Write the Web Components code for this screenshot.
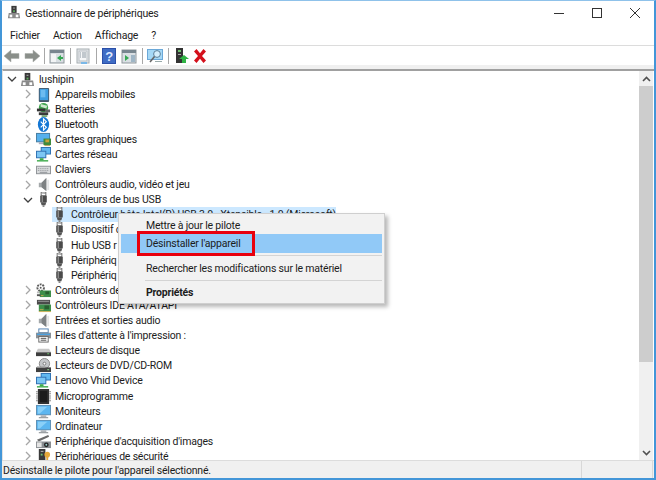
<!DOCTYPE html>
<html lang="fr">
<head>
<meta charset="utf-8">
<title>Gestionnaire de périphériques</title>
<style>
  html, body { margin: 0; padding: 0; background: #fff; overflow: hidden; }
</style>
</head>
<body>
<dm-window>
  <dm-titlebar slot="title">Gestionnaire de périphériques</dm-titlebar>
  <dm-menubar slot="menu"></dm-menubar>
  <dm-toolbar slot="toolbar"></dm-toolbar>
  <dm-tree slot="tree">
    <dm-row level="0" icon="root" open>lushipin</dm-row>
    <dm-row level="1" icon="mobile" closed>Appareils mobiles</dm-row>
    <dm-row level="1" icon="battery" closed>Batteries</dm-row>
    <dm-row level="1" icon="bluetooth" closed>Bluetooth</dm-row>
    <dm-row level="1" icon="gpu" closed>Cartes graphiques</dm-row>
    <dm-row level="1" icon="network" closed>Cartes réseau</dm-row>
    <dm-row level="1" icon="keyboard" closed>Claviers</dm-row>
    <dm-row level="1" icon="speaker" closed>Contrôleurs audio, vidéo et jeu</dm-row>
    <dm-row level="1" icon="usb" open>Contrôleurs de bus USB</dm-row>
    <dm-row level="2" icon="usb" selected>Contrôleur hôte Intel(R) USB 3.0 - Xtensible - 1.0 (Microsoft)</dm-row>
    <dm-row level="2" icon="usb">Dispositif c</dm-row>
    <dm-row level="2" icon="usb">Hub USB r</dm-row>
    <dm-row level="2" icon="usb">Périphériq</dm-row>
    <dm-row level="2" icon="usb">Périphériq</dm-row>
    <dm-row level="1" icon="storage" closed>Contrôleurs de</dm-row>
    <dm-row level="1" icon="ide" closed>Contrôleurs IDE ATA/ATAPI</dm-row>
    <dm-row level="1" icon="speaker" closed>Entrées et sorties audio</dm-row>
    <dm-row level="1" icon="printer" closed>Files d'attente à l'impression :</dm-row>
    <dm-row level="1" icon="disk" closed>Lecteurs de disque</dm-row>
    <dm-row level="1" icon="dvd" closed>Lecteurs de DVD/CD-ROM</dm-row>
    <dm-row level="1" icon="network" closed>Lenovo Vhid Device</dm-row>
    <dm-row level="1" icon="chip" closed>Microprogramme</dm-row>
    <dm-row level="1" icon="monitor" closed>Moniteurs</dm-row>
    <dm-row level="1" icon="monitor" closed>Ordinateur</dm-row>
    <dm-row level="1" icon="camera" closed>Périphérique d'acquisition d'images</dm-row>
    <dm-row level="1" icon="security" closed>Périphériques de sécurité</dm-row>
  </dm-tree>
  <dm-statusbar slot="status">Désinstalle le pilote pour l'appareil sélectionné.</dm-statusbar>
  <dm-context-menu slot="overlay"></dm-context-menu>
</dm-window>

<script>
const FONT = `Roboto, "Noto Sans", sans-serif`;

const ICONS = {
  root: `<rect x="5" y="1" width="6" height="8" fill="#3a3a3a"/><rect x="7" y="3" width="2" height="1" fill="#bbb"/><rect x="7" y="6" width="2" height="2" fill="#5fb05f"/><path d="M2 9h12l1 6H1z" fill="#8a8a8a"/><rect x="3" y="11" width="3" height="3" fill="#fff"/><rect x="10" y="11" width="3" height="3" fill="#fff"/>`,
  mobile: `<rect x="3" y="1" width="11" height="15" rx="1" fill="#46586a"/><rect x="4" y="2" width="9" height="12" fill="#3e9ee0"/><rect x="5" y="3" width="5" height="8" fill="#6cbcf0"/>`,
  battery: `<circle cx="8" cy="6" r="5" fill="#3fa34d"/><path d="M5 2l7 2-1 3-6-2z" fill="#cfe8cf"/><rect x="1" y="7" width="9" height="3" fill="#333"/><rect x="3" y="11" width="10" height="3" fill="#3a3a3a"/><rect x="10" y="8" width="5" height="3" fill="#666"/><rect x="6" y="14" width="6" height="2" fill="#7aa87a"/>`,
  bluetooth: `<ellipse cx="8" cy="8" rx="6" ry="8" fill="#1477d4"/><path d="M5 5l6 6-3 3V2l3 3-6 6" fill="none" stroke="#fff" stroke-width="1.2"/>`,
  gpu: `<rect x="0" y="1" width="15" height="10" fill="#4a7d9e"/><rect x="1" y="2" width="13" height="8" fill="#56b0ec"/><rect x="3" y="11" width="9" height="2" fill="#aab"/><rect x="8" y="7" width="8" height="7" fill="#3d8a3d"/><rect x="10" y="8" width="4" height="3" fill="#c9a23a"/><rect x="9" y="14" width="6" height="1" fill="#b8a050"/>`,
  network: `<rect x="5" y="0" width="11" height="8" fill="#2f6fb0"/><rect x="6" y="1" width="9" height="6" fill="#62b8f0"/><rect x="0" y="4" width="11" height="8" fill="#2f6fb0"/><rect x="1" y="5" width="9" height="6" fill="#7cc6f4"/><rect x="4" y="12" width="4" height="2" fill="#3daa4a"/><rect x="1" y="14" width="12" height="1.5" fill="#3daa4a"/>`,
  keyboard: `<rect x="0" y="4" width="16" height="9" fill="#8e9296"/><rect x="1" y="5" width="14" height="7" fill="#d8dadc"/><path d="M2 7h12M2 9h12" stroke="#8e9296" stroke-width="1" stroke-dasharray="1 1"/><rect x="4" y="10.5" width="8" height="1" fill="#8e9296"/>`,
  speaker: `<path d="M3 6h3l5-5v14l-5-4H3z" fill="#a4a8aa"/><path d="M6 6l5-5v14l-5-4z" fill="#7d8183"/><rect x="12" y="3" width="2" height="11" fill="#e2e4e5"/>`,
  usb: `<rect x="5.5" y="0" width="5" height="4" fill="#fff" stroke="#666"/><rect x="7" y="1" width="1" height="1" fill="#666"/><rect x="9" y="1" width="1" height="1" fill="#666"/><rect x="4.5" y="4" width="7" height="7" fill="#4a4a4a"/><rect x="6" y="4" width="1.5" height="7" fill="#8a8a8a"/><path d="M5 11h6l-1 3H6z" fill="#555"/><rect x="7" y="14" width="2" height="2" fill="#888"/>`,
  storage: `<circle cx="5" cy="5" r="3.5" fill="none" stroke="#5a5a5a" stroke-width="2" stroke-dasharray="2 1"/><circle cx="5" cy="5" r="1" fill="#5a5a5a"/><rect x="1" y="9" width="8" height="2" fill="#bbb"/><rect x="4" y="8" width="12" height="7" fill="#3d8f4a"/><rect x="10" y="9" width="4" height="3" fill="#2a5f30"/><rect x="5" y="13" width="3" height="1" fill="#c9b050"/><rect x="1" y="12" width="4" height="2" fill="#555"/>`,
  ide: `<rect x="1" y="2" width="14" height="5" fill="#4a4a4a"/><rect x="2" y="3" width="12" height="1" fill="#9a9a9a"/><rect x="3" y="7" width="13" height="7" fill="#3d8f4a"/><rect x="9" y="8" width="5" height="4" fill="#295f30"/><rect x="4" y="12" width="4" height="1" fill="#ccb050"/><rect x="3" y="14" width="13" height="1" fill="#c6ad50"/>`,
  printer: `<rect x="3" y="1" width="10" height="4" fill="#fff" stroke="#4f7fae"/><rect x="0" y="5" width="16" height="6" fill="#8a9096"/><rect x="1" y="6" width="14" height="1.5" fill="#4aa0e0"/><rect x="3" y="9" width="10" height="6" fill="#fff" stroke="#666"/><path d="M5 11h6M5 13h6" stroke="#444"/>`,
  disk: `<path d="M2 6h12l2 4v3H0v-3z" fill="#c8c8c8"/><rect x="0" y="10" width="16" height="4" fill="#3e3e3e"/><rect x="12" y="11" width="2" height="1" fill="#6fd06f"/>`,
  dvd: `<circle cx="9" cy="6" r="5.5" fill="#c4c6c8" stroke="#888"/><circle cx="9" cy="6" r="1.5" fill="#fff" stroke="#777"/><rect x="0" y="10" width="16" height="5" fill="#404040"/><rect x="1" y="9" width="9" height="1.5" fill="#999"/><rect x="12" y="12" width="2" height="1" fill="#9d9"/>`,
  chip: `<rect x="2" y="0" width="12" height="16" fill="#333"/><rect x="4" y="2" width="8" height="12" fill="#1c1c1c"/><path d="M1 2v12M15 2v12" stroke="#888" stroke-width="2" stroke-dasharray="1 1"/>`,
  monitor: `<rect x="0" y="1" width="16" height="11" fill="#5f8fb4"/><rect x="1" y="2" width="14" height="9" fill="#5cb6f0"/><path d="M2 3h10L4 10H2z" fill="#8ad0f8"/><rect x="5" y="12" width="6" height="2" fill="#b0b4b8"/><rect x="3" y="14" width="10" height="1.2" fill="#8f9498"/>`,
  camera: `<path d="M1 6L13 1l1 2L3 8z" fill="#6a6a6a"/><rect x="0" y="8" width="16" height="7" fill="#8a8e92"/><rect x="1" y="9" width="5" height="5" fill="#e4e4e4"/><circle cx="11" cy="11.5" r="2.5" fill="#222"/><circle cx="11" cy="11.5" r="1" fill="#9cc"/>`,
  security: `<rect x="3" y="0" width="7" height="15" fill="#3a3a3a"/><rect x="5" y="2" width="3" height="1" fill="#bbb"/><rect x="5" y="5" width="2" height="2" fill="#6fbf6f"/><circle cx="12" cy="6" r="3" fill="#e6a93a"/><rect x="11" y="8" width="2" height="7" fill="#e6a93a"/><rect x="13" y="12" width="2" height="1.5" fill="#e6a93a"/>`,
  // toolbar
  back: `<path d="M0 8l7-6v3.5h8v5H7V14z" fill="#8a8f8a" stroke="#a9ada9" stroke-width=".5"/>`,
  forward: `<path d="M16 8L9 2v3.5H1v5h8V14z" fill="#8a8f8a" stroke="#a9ada9" stroke-width=".5"/>`,
  props: `<rect x="1" y="2" width="14" height="13" fill="#d9dfe3" stroke="#8f979c"/><rect x="1" y="2" width="14" height="3" fill="#78868f"/><rect x="2" y="6" width="5" height="8" fill="#f2f4f5"/><path d="M12 7l-4 3 4 3z" fill="#35a853"/><rect x="12" y="9" width="2" height="2" fill="#35a853"/>`,
  sheet: `<rect x="2" y="1" width="12" height="14" fill="#e6e9eb" stroke="#a6adb2"/><rect x="4" y="3" width="8" height="10" fill="#f6f7f8" stroke="#b9c0c5"/><path d="M5 5h1M7 5h4M5 7h1M7 7h4M5 9h1M7 9h4" stroke="#8d99a3"/><rect x="6" y="14" width="6" height="2" fill="#7ab8e8"/>`,
  help: `<rect x="1" y="0" width="14" height="16" fill="#2b4fa8"/><rect x="2" y="1" width="12" height="14" fill="#3f6cc4"/><text x="8" y="13" font-size="13" font-weight="700" font-family="Liberation Sans" text-anchor="middle" fill="#dfe8ff">?</text>`,
  props2: `<rect x="1" y="2" width="14" height="13" fill="#d9dfe3" stroke="#8f979c"/><rect x="1" y="2" width="14" height="3" fill="#78868f"/><path d="M4 7l4 3-4 3z" fill="#35a853"/><rect x="10" y="7" width="4" height="7" fill="#9fb6c6"/>`,
  scan: `<rect x="0" y="1" width="16" height="11" fill="#6ba8d8"/><rect x="1" y="2" width="14" height="9" fill="#a5d8f6"/><circle cx="10" cy="6" r="3.4" fill="#d4eefc" stroke="#5b7f99"/><path d="M7.5 8.5L3 14" stroke="#666" stroke-width="1.6"/><rect x="8" y="13" width="7" height="1" fill="#9aa"/>`,
  update: `<rect x="3" y="0" width="7" height="15" fill="#333"/><rect x="5" y="2" width="3" height="2" fill="#6fbf6f"/><rect x="5" y="6" width="3" height="1" fill="#aaa"/><path d="M11 7l5 4h-3v4H9v-4H6z" fill="#2fb344"/>`,
  remove: `<path d="M2 3.5L4.5 1 8 5.2 11.5 1 14 3.5 10 8l4 4.500L11.500 15 8 10.800 4.500 15 2 12.500 6 8z" fill="#d4101c"/>`
};

const svgIcon = (name, size = 16) =>
  `<svg width="${size}" height="${size}" viewBox="0 0 16 16" aria-hidden="true">${ICONS[name]}</svg>`;

class DmWindow extends HTMLElement {
  constructor() {
    super();
    this.attachShadow({ mode: "open" });
    this.shadowRoot.innerHTML = `
      <style>
        :host {
          display: flex;
          flex-direction: column;
          position: relative;
          box-sizing: border-box;
          width: 656px;
          height: 480px;
          overflow: hidden;
          background: #fff;
          border: 2px solid #4396d8;
          border-top: 1px solid #8fc2ea;
          font: 10.5px ${FONT};
          letter-spacing: -0.2px;
          color: #1c1c1c;
        }
        .middle { flex: 1; min-height: 0; display: flex; }
      </style>
      <slot name="title"></slot>
      <slot name="menu"></slot>
      <slot name="toolbar"></slot>
      <div class="middle"><slot name="tree"></slot></div>
      <slot name="status"></slot>
      <slot name="overlay"></slot>`;
  }
}

class DmTitlebar extends HTMLElement {
  constructor() {
    super();
    this.attachShadow({ mode: "open" });
    this.shadowRoot.innerHTML = `
      <style>
        :host { display: flex; align-items: center; height: 24px; flex: none; padding-left: 5px; }
        .ico { width: 15px; height: 16px; margin-right: 3px; }
        .txt { flex: 1; }
        .ctl { width: 38px; height: 24px; display: flex; align-items: center; justify-content: center; }
      </style>
      <div class="ico">${svgIcon("root", 14)}</div>
      <div class="txt"><slot></slot></div>
      <div class="ctl"><svg width="10" height="10"><path d="M0 5.500h10" stroke="#333"/></svg></div>
      <div class="ctl"><svg width="10" height="10"><rect x=".5" y=".5" width="9" height="9" fill="none" stroke="#333"/></svg></div>
      <div class="ctl"><svg width="10" height="10"><path d="M0 0l10 10M10 0L0 10" stroke="#333"/></svg></div>`;
  }
}

class DmMenubar extends HTMLElement {
  constructor() {
    super();
    this.attachShadow({ mode: "open" });
    this.shadowRoot.innerHTML = `
      <style>
        :host { display: flex; align-items: center; height: 20px; flex: none; padding-left: 8px;
                border-bottom: 1px solid #dcdcdc; gap: 13px; }
      </style>
      ${["Fichier", "Action", "Affichage", "?"].map(m => `<span>${m}</span>`).join("")}`;
  }
}

class DmToolbar extends HTMLElement {
  constructor() {
    super();
    this.attachShadow({ mode: "open" });
    const items = ["back", "forward", "|", "props", "|", "sheet", "|", "help", "props2", "|", "scan", "|", "update", "remove"];
    this.shadowRoot.innerHTML = `
      <style>
        :host { display: block; flex: none; }
        .bar { display: flex; align-items: center; height: 19px; }
        .btn { width: 20px; height: 16px; display: flex; justify-content: center; }
        .btn:nth-last-child(2) { width: 19px; }
        .sep { width: 6px; height: 16px; display: flex; justify-content: center; }
        .sep:nth-child(3) { width: 5px; }
        .sep::before { content: ""; width: 1px; background: #a8a8a8; }
        .strip { height: 4px; background: #f0f0f0; }
      </style>
      <div class="bar">
        ${items.map(i => i === "|" ? `<div class="sep"></div>` : `<div class="btn">${svgIcon(i)}</div>`).join("")}
      </div>
      <div class="strip"></div>`;
  }
}

class DmTree extends HTMLElement {
  constructor() {
    super();
    this.attachShadow({ mode: "open" });
    this.shadowRoot.innerHTML = `
      <style>
        :host { flex: 1; min-width: 0; display: flex; height: 100%;
                border-top: 2px solid #a0a0a0; border-left: 1px solid #e2e2e2; box-sizing: border-box; }
        .rows { flex: 1; min-width: 0; overflow: hidden; padding-top: .5px; }
        .sb { width: 14px; flex: none; background: #f0f0f0; display: flex; flex-direction: column; margin-right: 1px; }
        .arrow { height: 15px; display: flex; align-items: center; justify-content: center; flex: none; }
        .track { flex: 1; min-height: 0; }
        .thumb { height: 276px; background: #cdcdcd; }
      </style>
      <div class="rows"><slot></slot></div>
      <div class="sb">
        <div class="arrow"><svg width="9" height="6"><path d="M1 5l3.500-3.500L8 5" fill="none" stroke="#505050" stroke-width="1.6"/></svg></div>
        <div class="track"><div class="thumb"></div></div>
        <div class="arrow"><svg width="9" height="6"><path d="M1 1l3.500 3.500L8 1" fill="none" stroke="#505050" stroke-width="1.6"/></svg></div>
      </div>`;
  }
}

class DmRow extends HTMLElement {
  constructor() {
    super();
    this.attachShadow({ mode: "open" });
  }
  connectedCallback() {
    const level = Number(this.getAttribute("level"));
    const pad = [1, 17, 49][level];
    let chev = "";
    if (this.hasAttribute("open")) {
      chev = `<svg width="10" height="10"><path d="M1 3l4 4 4-4" fill="none" stroke="#404040" stroke-width="1.3"/></svg>`;
    } else if (this.hasAttribute("closed")) {
      chev = `<svg width="10" height="10"><path d="M3 1l4 4-4 4" fill="none" stroke="#a6a6a6" stroke-width="1.3"/></svg>`;
    }
    const sel = this.hasAttribute("selected");
    this.shadowRoot.innerHTML = `
      <style>
        :host { display: flex; align-items: center; height: 15.1px; padding-left: ${pad}px; white-space: nowrap; }
        .tog { width: 16px; display: flex; justify-content: center; flex: none; }
        .ico { width: 16px; height: 15px; display: flex; align-items: center; flex: none; margin-right: 3px; }
        .ico svg { width: 15px; height: 15px; }
        .lbl { line-height: 15px; display: flex; align-items: center; }
        .wrap { display: flex; align-items: center; ${sel ? "background: #cce8ff;" : ""} }
      </style>
      ${level < 2 ? `<div class="tog">${chev}</div>` : ""}
      <div class="wrap">
        <div class="ico">${svgIcon(this.getAttribute("icon"))}</div>
        <div class="lbl"><slot></slot></div>
      </div>`;
  }
}

class DmStatusbar extends HTMLElement {
  constructor() {
    super();
    this.attachShadow({ mode: "open" });
    this.shadowRoot.innerHTML = `
      <style>
        :host { display: flex; flex: none; height: 18px; background: #f0f0f0; border-top: 1px solid #dcdcdc; box-sizing: border-box; }
        .a { flex: 1; padding-left: 1px; line-height: 20px; }
        .b { width: 70px; border-left: 1px solid #d8d8d8; border-right: 1px solid #d8d8d8; }
        .c { width: 1px; }
      </style>
      <div class="a"><slot></slot></div><div class="b"></div><div class="c"></div>`;
  }
}

class DmContextMenu extends HTMLElement {
  constructor() {
    super();
    this.attachShadow({ mode: "open" });
    this.shadowRoot.innerHTML = `
      <style>
        :host {
          position: absolute; left: 116px; top: 212px; width: 267px;
          background: #f2f2f2; border: 1px solid #cfcfcf; box-sizing: border-box;
          box-shadow: 3px 3px 4px rgba(0,0,0,.28);
          padding: 2px;
        }
        .item { height: 18px; line-height: 20px; padding-left: 25px; }
        .hot { background: #91c9f7; height: 19px; line-height: 20px; }
        .wide { height: 20px; line-height: 21px; }
        .sep { height: 1px; background: #d4d4d4; margin: 2px 0 2px 24px; }
        .bold { font-weight: 700; }
        .mark { position: absolute; left: 18px; top: 17px; width: 118px; height: 25px; box-sizing: border-box; border: 3px solid #e8000d; }
      </style>
      <div class="item">Mettre à jour le pilote</div>
      <div class="item hot">Désinstaller l'appareil</div>
      <div class="sep"></div>
      <div class="item wide">Rechercher les modifications sur le matériel</div>
      <div class="sep"></div>
      <div class="item bold">Propriétés</div>
      <div class="mark"></div>`;
  }
}

customElements.define("dm-window", DmWindow);
customElements.define("dm-titlebar", DmTitlebar);
customElements.define("dm-menubar", DmMenubar);
customElements.define("dm-toolbar", DmToolbar);
customElements.define("dm-tree", DmTree);
customElements.define("dm-row", DmRow);
customElements.define("dm-statusbar", DmStatusbar);
customElements.define("dm-context-menu", DmContextMenu);
</script>
</body>
</html>
